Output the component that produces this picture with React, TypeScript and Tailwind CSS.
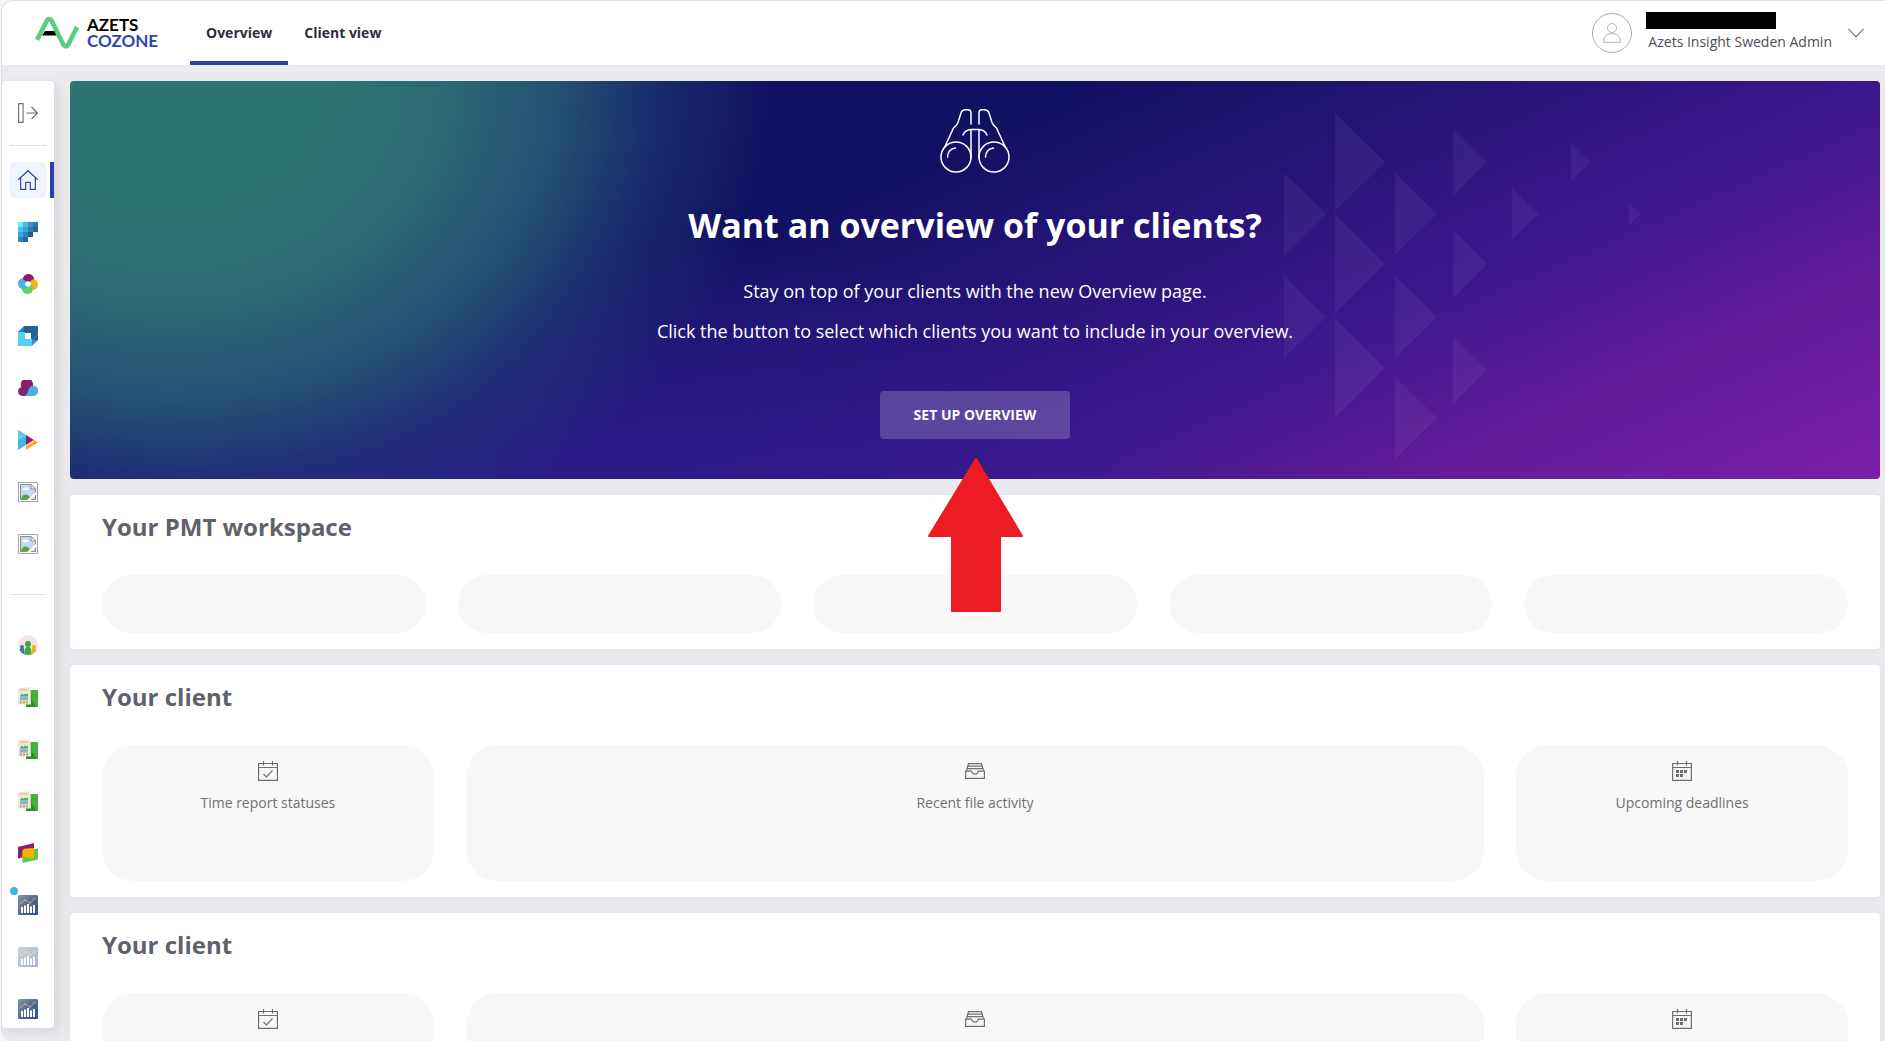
import React from 'react'

type IconProps = { className?: string }

/* ---------- Logo ---------- */

const Logo: React.FC = () => (
  <a href="#" className="flex items-center gap-2 w-[155px] shrink-0" aria-label="Azets Cozone">
    <svg width="44" height="32" viewBox="0 0 44 32" className="shrink-0">
      <path d="M10 14h10.500l2.500 4.500H7z" fill="#000" />
      <path
        d="M2 23 12 3.500Q14.200 0 16.500 3.500L28.300 27.500Q31 31.500 33.300 27.500L42 10"
        fill="none"
        stroke="#5bcb7f"
        strokeWidth="4.600"
        strokeLinejoin="round"
      />
    </svg>
    <span className="flex flex-col font-['Lato',sans-serif] text-[17px] leading-4 font-bold">
      <span className="text-black">AZETS</span>
      <span className="text-[#2b48a8]">COZONE</span>
    </span>
  </a>
)

/* ---------- Line icons ---------- */

const ExpandIcon: React.FC<IconProps> = ({ className }) => (
  <svg width="20" height="20" viewBox="0 0 20 20" fill="none" stroke="currentColor" strokeWidth="1.100" className={className}>
    <path d="M.6.6h4.500v18.800H.6zM8.500 10h11M13.500 4l6 6-6 6" />
  </svg>
)

const HomeIcon: React.FC<IconProps> = ({ className }) => (
  <svg width="20" height="20" viewBox="0 0 20 20" fill="none" stroke="currentColor" strokeWidth="1.200" strokeLinejoin="round" strokeLinecap="round" className={className}>
    <path d="M.7 9.300 10 .7l9.300 8.600M2.700 7.700v11.700h5v-7h4.600v7h5V7.700" />
  </svg>
)

const UserIcon: React.FC<IconProps> = ({ className }) => (
  <svg width="18" height="20" viewBox="0 0 18 20" fill="none" stroke="currentColor" className={className}>
    <circle cx="9" cy="5" r="4.500" />
    <path d="M.5 19.300v-1.500a7 7 0 0 1 7-7h3a7 7 0 0 1 7 7v1.500z" />
  </svg>
)

const CalendarCheckIcon: React.FC = () => (
  <svg width="20" height="20" viewBox="0 0 20 20" fill="none" stroke="currentColor" strokeWidth="1.200">
    <path d="M.6 2.500h18.800v16.900H.6zM.6 6.500h18.800M5.500 0v4.500M14.500 0v4.500M5.500 13l3 3 6-6.500" />
  </svg>
)

const CalendarIcon: React.FC = () => (
  <svg width="20" height="20" viewBox="0 0 20 20" fill="none" stroke="currentColor" strokeWidth="1.200">
    <path d="M.6 2.500h18.800v16.900H.6zM.6 6.500h18.800M5.500 0v4.500M14.500 0v4.500" />
    <path d="M4 9h3v3H4zM8 9h3v3H8zM12 9h3v3h-3zM4 13h3v3H4zM8 13h3v3H8z" fill="currentColor" stroke="none" />
  </svg>
)

const InboxIcon: React.FC = () => (
  <svg width="20" height="20" viewBox="0 0 20 20" fill="none" stroke="currentColor" strokeWidth="1.200">
    <path d="M.6 10.200h5.900c.4 1.900 1.700 3 3.500 3s3.100-1.100 3.500-3h5.900v7.200H.6z" />
    <path d="M1.500 9.500 3.500 2.600h13l2 6.900M3 5.200h14M2.500 7.700h15" />
  </svg>
)

const BinocularsIcon: React.FC = () => (
  <svg width="70" height="64" viewBox="0 0 70 64" fill="none" stroke="#fff" strokeWidth="1.500" strokeLinecap="round">
    <circle cx="16" cy="48" r="15" />
    <circle cx="54" cy="48" r="15" />
    <path d="M4.500 38.500 13.500 19q3-2 4.500-5.500L21 4q1-3.200 4.500-3.200H28Q31 .8 31 4v11" />
    <path d="M65.500 38.500 56.500 19q-3-2-4.500-5.500L49 4Q48 .8 44.500.8H42Q39 .8 39 4v11" />
    <path d="M23 26q2-5 8-5.500h8q6 .5 8 5.500M31 20.500V49M39 20.500V49" />
    <path d="M7.500 48q.5-8 8-9M45.500 48q.5-8 8-9" />
  </svg>
)

/* ---------- Colored app icons ---------- */

const TILE_ROWS = [
  ['#5ff0fa', '#4bb8e6', '#3a93c6', '#2b78ae'],
  ['#4cc5ec', '#3ea2d3', '#2e7fb4', '#236298'],
  ['#3fa5d4', '#3085b8', '#205e92'],
  ['#3287b8', '#24659a'],
]

const PixelIcon: React.FC = () => (
  <svg width="20" height="20" viewBox="0 0 20 20">
    {TILE_ROWS.map((row, y) =>
      row.map((color, x) => <rect key={`${x}-${y}`} x={x * 5} y={y * 5} width="5" height="5" fill={color} />)
    )}
  </svg>
)

const FlowerIcon: React.FC = () => (
  <svg width="20" height="20" viewBox="0 0 20 20">
    <circle cx="10.500" cy="5.500" r="5.500" fill="#85226f" />
    <circle cx="14.500" cy="10.500" r="5.500" fill="#f8b219" />
    <circle cx="9.500" cy="14.500" r="5.500" fill="#5fd35f" />
    <circle cx="5.500" cy="9.500" r="5.500" fill="#4ab3df" />
    <path d="M5 5.500A5.500 5.500 0 0 1 15.900 5Q12 6 11.500 10L8 8Q7.500 5.500 5 5.500z" fill="#85226f" />
    <circle cx="10" cy="10" r="2.800" fill="#fff" />
  </svg>
)

const CubeIcon: React.FC = () => (
  <svg width="20" height="20" viewBox="0 0 20 20">
    <path d="M6 0h14v14h-7V7H6z" fill="#21618f" />
    <path d="M0 6 6 0v7z" fill="#2c7db0" />
    <path d="M0 6h7v7h7v7H0z" fill="#54d1f6" />
    <path d="M14 20v-6h6z" fill="#3d92c0" />
    <path d="M0 20 7 13M14 14l6-6" stroke="#45b0da" strokeWidth=".5" />
    <rect x="7" y="7" width="6" height="6" fill="#fff" />
  </svg>
)

const CloudIcon: React.FC = () => (
  <svg width="20" height="16" viewBox="0 0 20 16">
    <path d="M4.500 16A4.500 4.500 0 0 1 3.300 7.200 6.200 6.200 0 1 1 15 6L9 16z" fill="#85226f" />
    <path d="M6.500 16Q9 15 10 11.500 11.500 6 15 5.500a5.200 5.200 0 0 1 0 10.500z" fill="#4ab3df" />
  </svg>
)

const PlayIcon: React.FC = () => (
  <svg width="20" height="20" viewBox="0 0 20 20">
    <path d="M0 0 8 5v10L0 20z" fill="#4ab3df" />
    <path d="M0 0 8 5v1L0 10z" fill="#5dcbf0" />
    <path d="M8 5l8 5-8 5z" fill="#85226f" />
    <path d="M20 12.500 8 20v-4l8-4.500z" fill="#f8b219" />
    <path d="m16 10 4 2.500-5 1.500z" fill="#ea9a35" />
  </svg>
)

const BrokenImageIcon: React.FC = () => (
  <svg width="20" height="20" viewBox="0 0 20 20">
    <rect x=".5" y=".5" width="19" height="19" fill="#fff" stroke="#a9a9a9" />
    <path d="M2.500 2.500h10.500l4.500 4.500v10.500h-15z" fill="#c6d8fa" stroke="#8d8d8d" />
    <path d="M13 2.500V7h4.500z" fill="#fff" stroke="#8d8d8d" />
    <path d="M4.500 8q.2-2 2-2 1.500-2 3 0 1.500.2 1.500 2z" fill="#fff" />
    <path d="M3 17q1-4.500 4.500-4.500T13 17z" fill="#54a63b" />
    <path d="m9 18 9-8v2.500L12.500 18z" fill="#fff" />
  </svg>
)

const PeopleIcon: React.FC = () => (
  <svg width="20" height="20" viewBox="0 0 20 20">
    <circle cx="10" cy="10" r="10" fill="#f2e6e4" />
    <path d="M1.800 15.500q0-3 2.200-3t2.500 3v4Q3.500 18.500 1.800 15.500z" fill="#3f76ae" />
    <circle cx="4" cy="12" r="2" fill="#3f76ae" />
    <path d="M18.200 15.500q0-3-2.200-3t-2.500 3v4q3-1 4.700-4z" fill="#e4b21c" />
    <circle cx="16" cy="12" r="2" fill="#e4b21c" />
    <circle cx="10" cy="9" r="3" fill="#42a83c" />
    <path d="M6 19.200q1-1 1-3.700 0-4 3-4t3 4q0 2.700 1 3.700-4 1.600-8 0z" fill="#42a83c" />
  </svg>
)

const ReportIcon: React.FC = () => (
  <svg width="20" height="20" viewBox="0 0 20 20">
    <path d="M8 3h12v17H8z" fill="#45b03c" />
    <path d="m15.500 5-2.500 6 5.500 9H8v-3z" fill="#2f8a33" />
    <path d="M0 1 12.500.3 13 17.500H0z" fill="#efe6dc" />
    <path d="M2.500 2h7v2h-7z" fill="#e5d289" />
    <path d="M2 9 4 6.500 5.500 8 7 6.500l1.500 1 1.500-1v3H2z" fill="#4aa868" />
    <path d="M2 9.500h8v4H2z" fill="#8fb6c2" />
    <path d="M2 14.500h2v2H2zM5 14.500h2v2H5zM8 14.500h2v2H8z" fill="#b7a13c" />
  </svg>
)

const FlagsIcon: React.FC = () => (
  <svg width="20" height="20" viewBox="0 0 20 20">
    <path d="m0 4 16-4v12L0 15.500z" fill="#85226f" />
    <path d="M4.500 8 20 5.500v11L4.500 20z" fill="#63c455" />
    <path d="M4.500 8Q4.500 6 6.500 5.700L16 5v10L4.500 14.500z" fill="#f9b100" />
  </svg>
)

const ChartIcon: React.FC<IconProps> = ({ className }) => (
  <svg width="20" height="20" viewBox="0 0 20 20" className={className}>
    <defs>
      <linearGradient id="chart-bg" x1="0" y1="0" x2="1" y2="1">
        <stop offset="0" stopColor="#8594ae" />
        <stop offset=".6" stopColor="#4a6391" />
        <stop offset="1" stopColor="#2d4a80" />
      </linearGradient>
    </defs>
    <rect width="20" height="20" rx="1.500" fill="url(#chart-bg)" />
    <path d="M3 12h2v6H3zM6 10.500h2V18H6zM9 9h2v9H9zM12 11.500h2V18h-2zM15 10h2v8h-2z" fill="#fff" />
    <path d="m3 8 4-3 5 3 5-5" fill="none" stroke="#c2ae62" strokeWidth=".8" />
    <path d="M2.300 7.200h1.500v1.500H2.300zM6.300 4.300h1.500v1.500H6.300zM11.300 7.300h1.500v1.500h-1.500zM15.800 2.700h1.500v1.500h-1.500z" fill="#c2ae62" />
  </svg>
)

/* ---------- Sidebar ---------- */

type NavItem = { label: string; icon: React.ReactNode; badge?: boolean }

const APP_ITEMS: NavItem[] = [
  { label: 'Apps', icon: <PixelIcon /> },
  { label: 'Collaboration', icon: <FlowerIcon /> },
  { label: 'Documents', icon: <CubeIcon /> },
  { label: 'Cloud', icon: <CloudIcon /> },
  { label: 'Workflow', icon: <PlayIcon /> },
  { label: 'Link one', icon: <BrokenImageIcon /> },
  { label: 'Link two', icon: <BrokenImageIcon /> },
]

const TOOL_ITEMS: NavItem[] = [
  { label: 'People', icon: <PeopleIcon /> },
  { label: 'Report one', icon: <ReportIcon /> },
  { label: 'Report two', icon: <ReportIcon /> },
  { label: 'Report three', icon: <ReportIcon /> },
  { label: 'Cards', icon: <FlagsIcon /> },
  { label: 'Analytics', icon: <ChartIcon />, badge: true },
  { label: 'Analytics archive', icon: <ChartIcon className="opacity-40" /> },
  { label: 'Statistics', icon: <ChartIcon /> },
]

const SidebarLink: React.FC<{ item: NavItem }> = ({ item }) => (
  <a href="#" aria-label={item.label} className="relative flex items-center justify-center w-9 h-9 rounded">
    {item.icon}
    {item.badge && <span className="absolute left-0 top-0 w-2 h-2 rounded-full bg-[#46b2e0]" />}
  </a>
)

const Sidebar: React.FC = () => (
  <nav className="flex flex-col items-center gap-4 w-[52px] shrink-0 self-start pt-4 pb-px bg-white rounded shadow-[4px_4px_12px_rgba(40,40,70,0.12)]">
    <button type="button" aria-label="Expand menu" className="flex items-center justify-center w-9 h-8 text-[#6c6c6c]">
      <ExpandIcon />
    </button>
    <div className="w-9 h-px bg-[#e2e2e6]" />
    <a href="#" aria-label="Home" className="relative flex items-center justify-center w-9 h-9 rounded bg-[#f0f5fe] text-[#2c47a8]">
      <HomeIcon />
      <span className="absolute -right-2 top-0 w-1 h-9 bg-[#2740ae]" />
    </a>
    {APP_ITEMS.map((item) => (
      <SidebarLink key={item.label} item={item} />
    ))}
    <div className="w-9 h-px my-4 bg-[#e2e2e6]" />
    {TOOL_ITEMS.map((item) => (
      <SidebarLink key={item.label} item={item} />
    ))}
  </nav>
)

/* ---------- Header ---------- */

const Header: React.FC = () => (
  <header className="flex items-center h-16 shrink-0 pl-[33px] pr-[21px] bg-white">
    <Logo />
    <nav className="flex self-stretch text-sm font-bold text-[#2c2e3a]">
      <a href="#" className="flex items-center px-4 border-y-4 border-t-transparent border-b-[#2a459f]">
        Overview
      </a>
      <a href="#" className="flex items-center px-4 border-y-4 border-transparent">
        Client view
      </a>
    </nav>
    <button type="button" className="flex items-center ml-auto text-left">
      <span className="flex items-center justify-center w-10 h-10 mr-3.5 rounded-full border border-[#a9a9ad] text-[#b4b4b8]">
        <UserIcon />
      </span>
      <span className="flex flex-col gap-px mr-4">
        <span className="w-[130px] h-[17px] bg-black" />
        <span className="pl-0.5 text-sm leading-6 text-[#4a4d57]">Azets Insight Sweden Admin</span>
      </span>
      <svg width="16" height="10" viewBox="0 0 16 10" fill="none" stroke="#777" strokeWidth="1.200">
        <path d="m.5.8 7.500 8 7.500-8" />
      </svg>
    </button>
  </header>
)

/* ---------- Hero ---------- */

// x, center y, width and half height of every background triangle
const TRIANGLES = [
  [1214, 133, 42, 41],
  [1214, 236, 42, 41],
  [1265, 81, 50, 49],
  [1265, 183, 50, 50],
  [1265, 287, 50, 50],
  [1325, 133, 42, 41],
  [1325, 236, 42, 41],
  [1325, 337, 42, 41],
  [1383, 81, 34, 34],
  [1383, 183, 34, 34],
  [1383, 289, 34, 34],
  [1442, 133, 27, 26],
  [1501, 81, 20, 19],
  [1559, 133, 12, 11],
]

const Hero: React.FC = () => (
  <section className="relative flex flex-col items-center pt-7 pb-10 rounded overflow-hidden text-white text-center bg-[radial-gradient(610px_500px_at_100px_0px,#2f7474_25%,#2c6974_45%,rgba(37,86,116,0.92)_64%,rgba(30,60,116,0.6)_80%,rgba(24,40,110,0)_100%),radial-gradient(750px_260px_at_400px_400px,rgba(48,30,145,0.7)_0%,rgba(48,30,145,0.5)_40%,rgba(48,30,145,0)_100%),linear-gradient(156deg,#0f1060_36%,#39178a_66%,#641c99_84%,#7b1fa8_100%)]">
    <svg className="absolute inset-0 w-full h-full" viewBox="0 0 1810 398" preserveAspectRatio="xMidYMid slice" fill="#fff" fillOpacity=".05">
      {TRIANGLES.map(([x, y, w, h]) => (
        <path key={`${x}-${y}`} d={`M${x} ${y - h}l${w} ${h}l${-w} ${h}z`} />
      ))}
    </svg>
    <div className="relative flex flex-col items-center">
      <BinocularsIcon />
      <h1 className="mt-8 text-[34px] leading-10 font-bold">Want an overview of your clients?</h1>
      <p className="mt-[26px] text-lg leading-10">Stay on top of your clients with the new Overview page.</p>
      <p className="text-lg leading-10">Click the button to select which clients you want to include in your overview.</p>
      <button type="button" className="mt-10 h-12 w-[190px] rounded bg-white/20 text-sm font-bold">
        SET UP OVERVIEW
      </button>
    </div>
  </section>
)

/* ---------- Cards ---------- */

const Card: React.FC<{ title: string; children: React.ReactNode }> = ({ title, children }) => (
  <section className="px-8 py-4 bg-white rounded shadow-[0_2px_8px_rgba(40,40,70,0.06)]">
    <h2 className="mb-8 text-2xl font-bold text-[#5f626a]">{title}</h2>
    {children}
  </section>
)

const Tile: React.FC<{ icon: React.ReactNode; label: string }> = ({ icon, label }) => (
  <div className="flex flex-col items-center gap-3 h-[136px] pt-4 rounded-4xl bg-[#f8f8f8] text-[#6c6f75]">
    {icon}
    <span className="text-sm">{label}</span>
  </div>
)

const ClientCard: React.FC = () => (
  <Card title="Your client">
    <div className="grid grid-cols-[19%_1fr_19%] gap-8">
      <Tile icon={<CalendarCheckIcon />} label="Time report statuses" />
      <Tile icon={<InboxIcon />} label="Recent file activity" />
      <Tile icon={<CalendarIcon />} label="Upcoming deadlines" />
    </div>
  </Card>
)

const PointerArrow: React.FC = () => (
  <svg
    width="96"
    height="155"
    viewBox="0 0 96 155"
    className="absolute left-1/2 top-[377px] -translate-x-1/2 pointer-events-none"
    fill="#ed1c24"
    stroke="#ed1c24"
    strokeWidth="2"
    strokeLinejoin="round"
  >
    <path d="M49 1 95 78H73v75H25V78H2z" />
  </svg>
)

export default function App() {
  return (
    <div className="h-screen pl-px bg-[#f6f6f7] font-['Open_Sans',sans-serif]">
      <div className="flex flex-col h-full border-l border-t border-[#e0e0e4] rounded-l-xl overflow-hidden bg-[#ebebef]">
        <Header />
        <div className="flex flex-1 min-h-0 gap-4 pt-4 pr-[5px]">
          <Sidebar />
          <main className="relative flex-1 min-w-0">
            <div className="flex flex-col gap-4">
              <Hero />
              <Card title="Your PMT workspace">
                <div className="grid grid-cols-5 gap-8">
                  {[0, 1, 2, 3, 4].map((i) => (
                    <div key={i} className="h-[58px] rounded-full bg-[#f8f8f8]" />
                  ))}
                </div>
              </Card>
              <ClientCard />
              <ClientCard />
            </div>
            <PointerArrow />
          </main>
        </div>
      </div>
    </div>
  )
}
